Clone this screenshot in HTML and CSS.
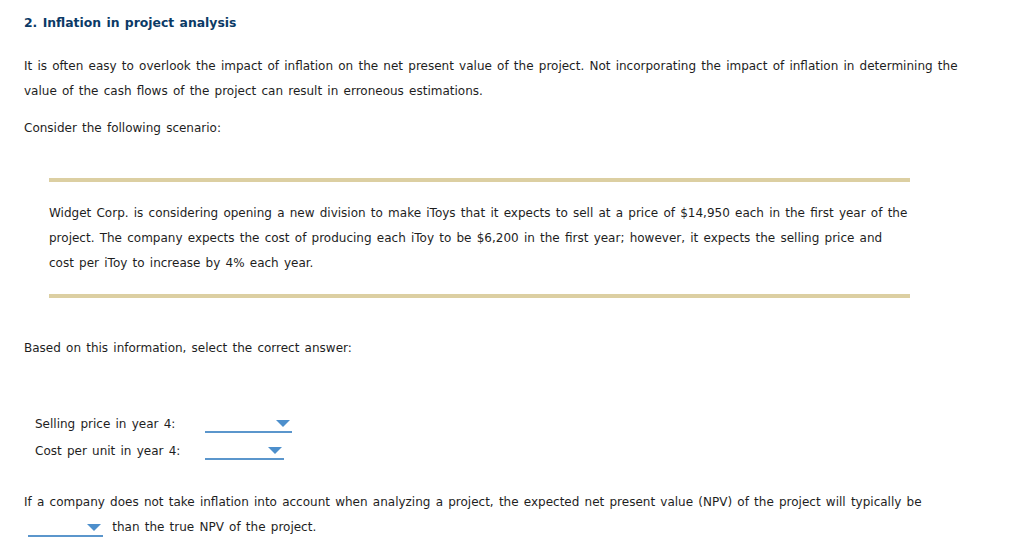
FILE: index.html
```html
<!DOCTYPE html>
<html>
<head>
<meta charset="utf-8">
<link rel="stylesheet" href="styles.css">
</head>
<body>
<div class="page">
  <h2 class="title">2. Inflation in project analysis</h2>
  <p class="para">It is often easy to overlook the impact of inflation on the net present value of the project. Not incorporating the impact of inflation in determining the value of the cash flows of the project can result in erroneous estimations.</p>
  <p class="para">Consider the following scenario:</p>
  <div class="scenario">
    <p class="para">Widget Corp. is considering opening a new division to make iToys that it expects to sell at a price of $14,950 each in the first year of the project. The company expects the cost of producing each iToy to be $6,200 in the first year; however, it expects the selling price and cost per iToy to increase by 4% each year.</p>
  </div>
  <p class="para">Based on this information, select the correct answer:</p>
  <div class="answers">
    <span class="label">Selling price in year 4:</span>
    <span class="dropdown w87"><span class="arrow"></span></span>
    <span class="label">Cost per unit in year 4:</span>
    <span class="dropdown w79"><span class="arrow"></span></span>
  </div>
  <p class="para last">If a company does not take inflation into account when analyzing a project, the expected net present value (NPV) of the project will typically be <span class="dropdown inline w75"><span class="arrow"></span></span> than the true NPV of the project.</p>
</div>
</body>
</html>
```
FILE: styles.css
```css
html, body {
  margin: 0;
  padding: 0;
  background: #ffffff;
}
.page {
  padding: 13px 24px 0 24px;
  font-family: "DejaVu Sans", Verdana, sans-serif;
  font-size: 12px;
  word-spacing: 1.4px;
  color: #1e1e1e;
  width: 940px;
}
.title {
  margin: 0;
  font-size: 12.4px;
  word-spacing: 1px;
  line-height: 20px;
  font-weight: bold;
  color: #0b3a66;
}
.para {
  margin: 0;
  line-height: 25px;
}
.title + .para {
  margin-top: 21px;
}
.para + .para {
  margin-top: 12px;
}
.scenario {
  margin: 37px 54px 38px 25px;
  border-top: 4px solid #dccfa2;
  border-bottom: 4px solid #dccfa2;
  padding: 19px 0 18px 0;
}
.answers {
  margin: 49px 0 0 11px;
  display: grid;
  grid-template-columns: 170px auto;
  grid-auto-rows: 27px;
  align-items: center;
  justify-items: start;
}
.dropdown {
  display: inline-block;
  position: relative;
  height: 17px;
  border-bottom: 2px solid #5b96cc;
  vertical-align: -6px;
}
.w87 { width: 87px; }
.w79 { width: 79px; }
.w75 { width: 75px; margin-right: 4px; }
.arrow {
  position: absolute;
  right: 2px;
  top: 6px;
  width: 0;
  height: 0;
  border-left: 7px solid transparent;
  border-right: 7px solid transparent;
  border-top: 7px solid #4d8fcc;
}
.inline {
  margin-left: 4px;
}
.last {
  margin-top: 26px;
}
```
